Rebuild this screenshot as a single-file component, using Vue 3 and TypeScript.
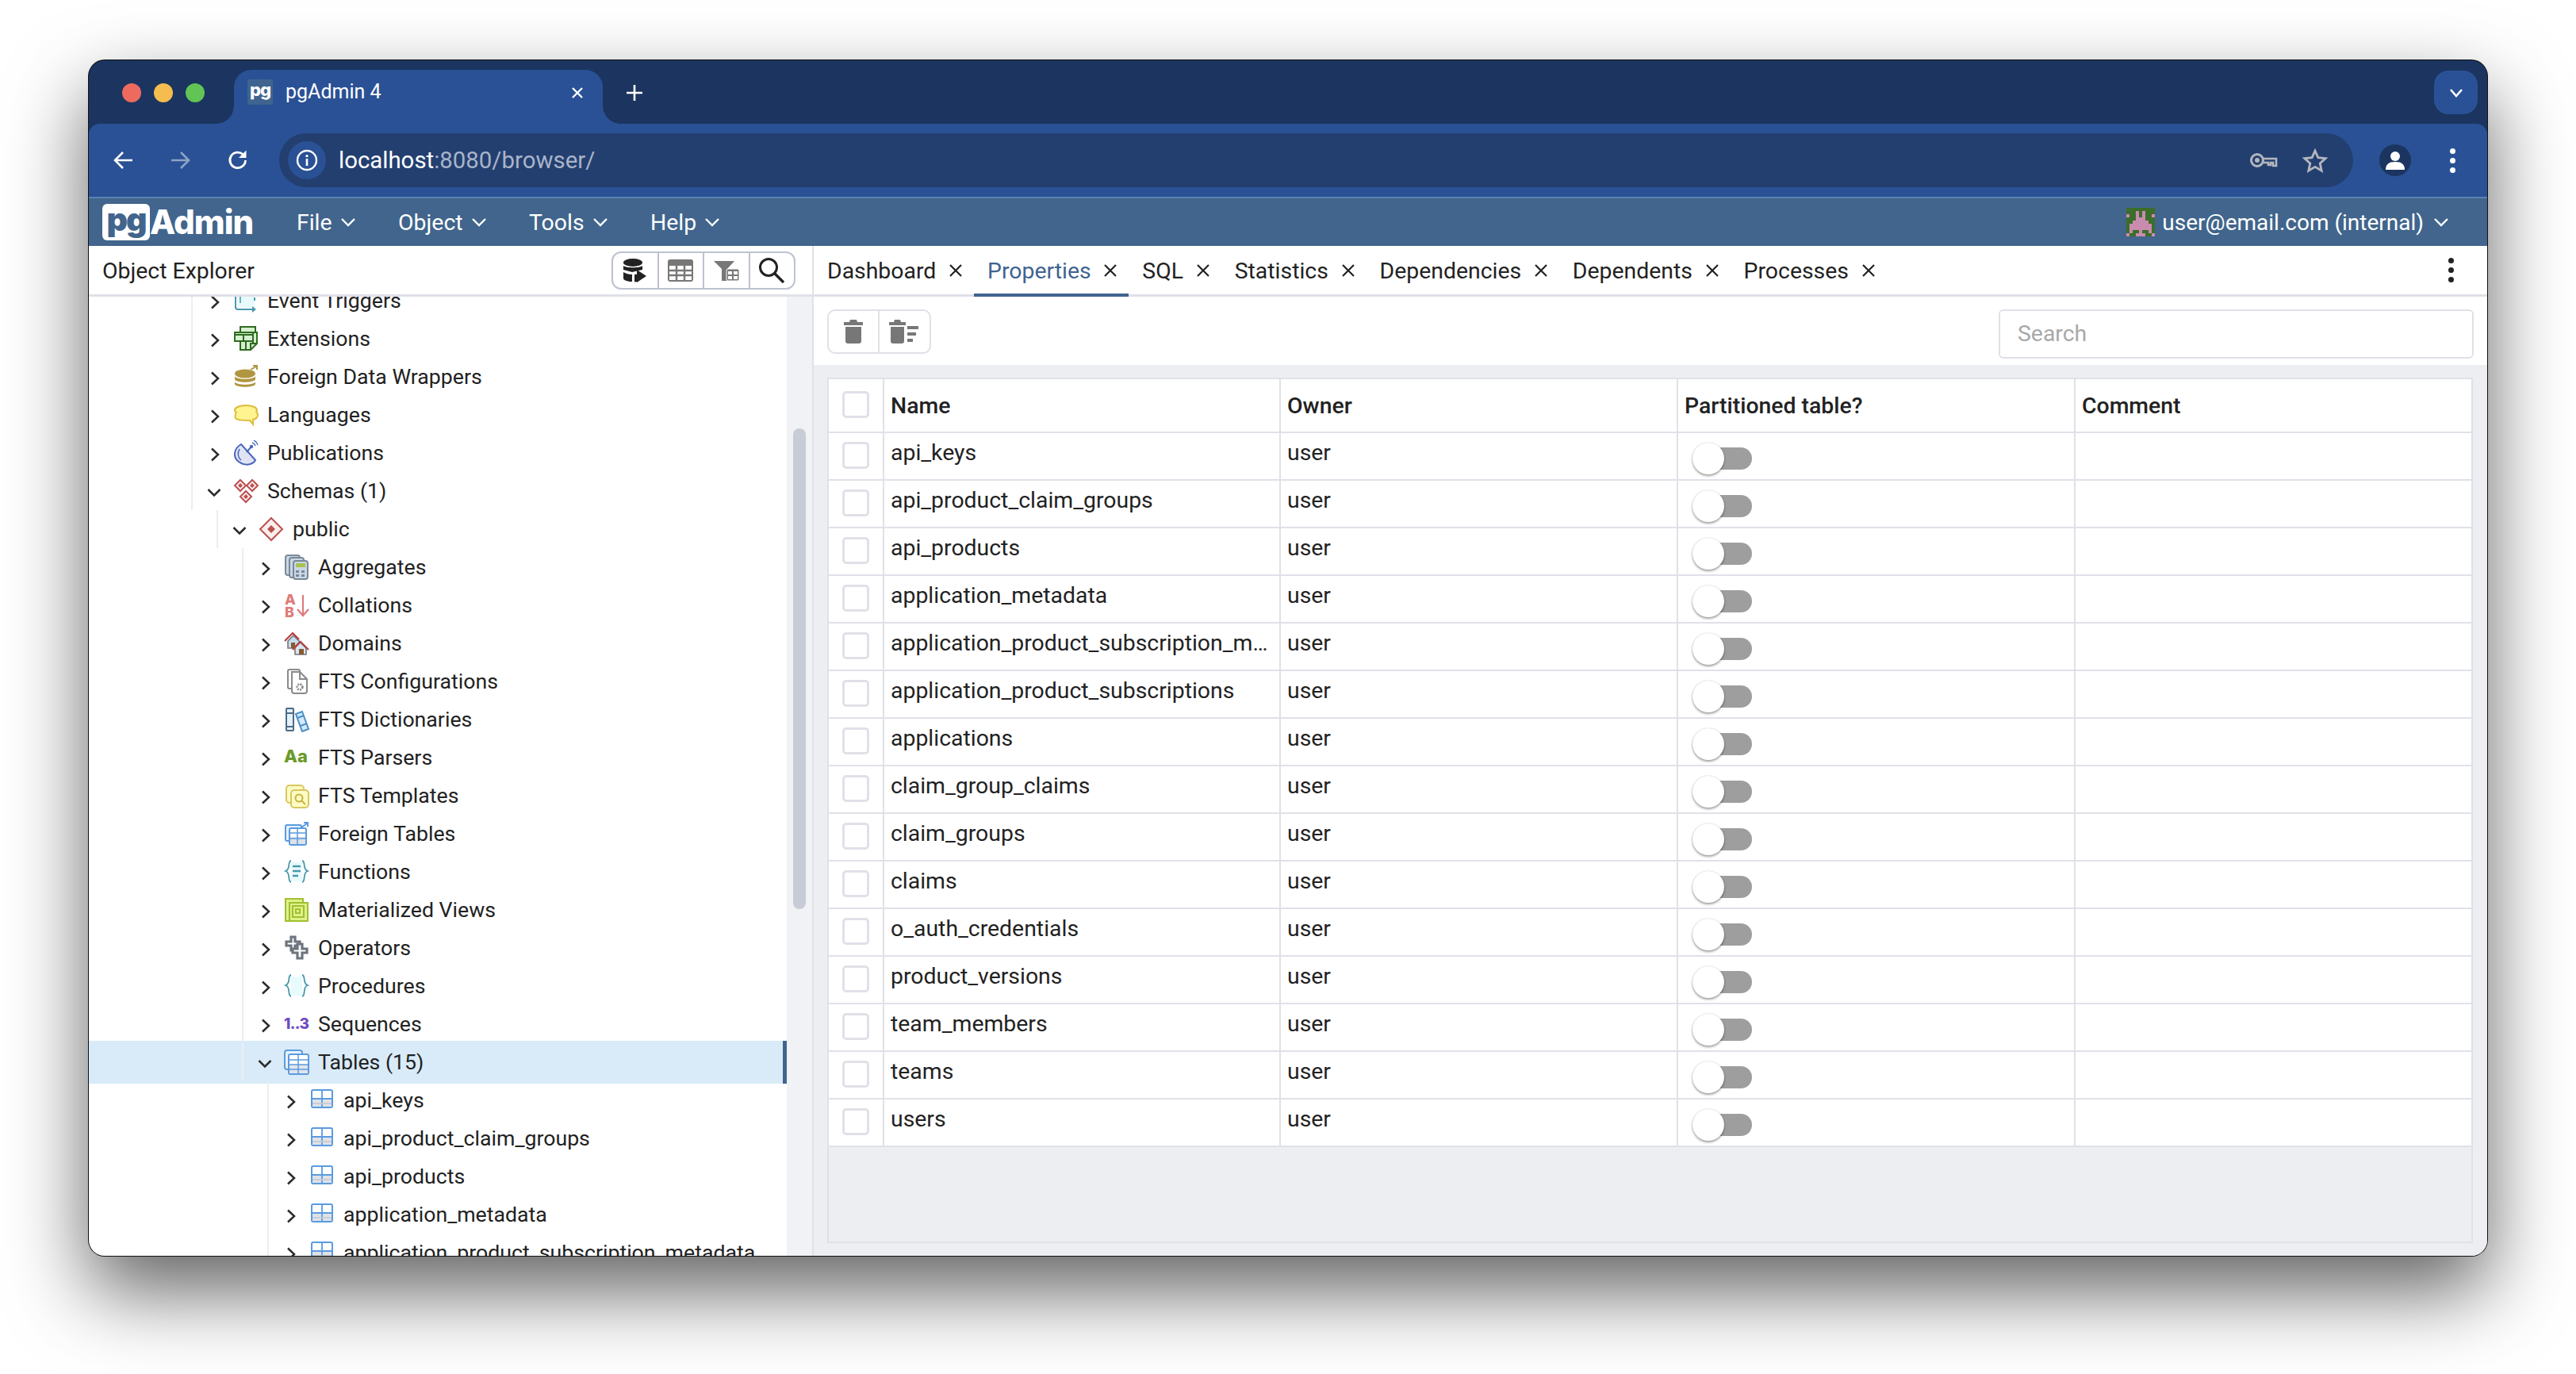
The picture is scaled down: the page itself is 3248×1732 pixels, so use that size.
<script setup lang="ts">
interface TreeRow { label: string; icon: string; level: number; open?: boolean; selected?: boolean }
const tree: TreeRow[] = [
  { label: 'Event Triggers', icon: 'trig', level: 0 },
  { label: 'Extensions', icon: 'ext', level: 0 },
  { label: 'Foreign Data Wrappers', icon: 'fdw', level: 0 },
  { label: 'Languages', icon: 'lang', level: 0 },
  { label: 'Publications', icon: 'pub', level: 0 },
  { label: 'Schemas (1)', icon: 'schemas', level: 0, open: true },
  { label: 'public', icon: 'public', level: 1, open: true },
  { label: 'Aggregates', icon: 'agg', level: 2 },
  { label: 'Collations', icon: 'coll', level: 2 },
  { label: 'Domains', icon: 'dom', level: 2 },
  { label: 'FTS Configurations', icon: 'conf', level: 2 },
  { label: 'FTS Dictionaries', icon: 'dict', level: 2 },
  { label: 'FTS Parsers', icon: 'pars', level: 2 },
  { label: 'FTS Templates', icon: 'tmpl', level: 2 },
  { label: 'Foreign Tables', icon: 'ftab', level: 2 },
  { label: 'Functions', icon: 'func', level: 2 },
  { label: 'Materialized Views', icon: 'mview', level: 2 },
  { label: 'Operators', icon: 'op', level: 2 },
  { label: 'Procedures', icon: 'proc', level: 2 },
  { label: 'Sequences', icon: 'seq', level: 2 },
  { label: 'Tables (15)', icon: 'tabs', level: 2, open: true, selected: true },
  { label: 'api_keys', icon: 'tab', level: 3 },
  { label: 'api_product_claim_groups', icon: 'tab', level: 3 },
  { label: 'api_products', icon: 'tab', level: 3 },
  { label: 'application_metadata', icon: 'tab', level: 3 },
  { label: 'application_product_subscription_metadata', icon: 'tab', level: 3 },
]
const tabs = ['Dashboard', 'Properties', 'SQL', 'Statistics', 'Dependencies', 'Dependents', 'Processes']
const menus = ['File', 'Object', 'Tools', 'Help']
const names = [
  'api_keys', 'api_product_claim_groups', 'api_products', 'application_metadata',
  'application_product_subscription_metadata', 'application_product_subscriptions', 'applications',
  'claim_group_claims', 'claim_groups', 'claims', 'o_auth_credentials', 'product_versions',
  'team_members', 'teams', 'users',
]
const avatarPink = [
  [3, 1, 1, 2], [5, 1, 1, 2], [0, 2, 1, 1], [8, 2, 1, 1],
  [3, 3, 3, 1], [3, 4, 3, 1], [2, 4, 5, 3], [1, 5, 7, 2], [1, 7, 1, 1], [7, 7, 1, 1], [0, 8, 1, 1], [8, 8, 1, 1], [4, 7, 1, 1],
]
</script>

<template>
  <div class="page">
    <div class="window">
      <div class="tabstrip">
        <div class="lights"><i class="l red"></i><i class="l yellow"></i><i class="l green"></i></div>
        <div class="btab">
          <span class="fav">pg</span>
          <span class="btab-title">pgAdmin 4</span>
          <svg class="btab-x" width="16" height="16" viewBox="0 0 16 16"><path d="M2 2l12 12M14 2L2 14" stroke="#fff" stroke-width="2.4" fill="none" /></svg>
        </div>
        <svg class="plus" width="24" height="24" viewBox="0 0 24 24"><path d="M12 2v20M2 12h20" stroke="#fff" stroke-width="2.6" fill="none" /></svg>
        <div class="spacer"></div>
        <div class="tabmenu"><svg width="18" height="12" viewBox="0 0 18 12"><path d="M2 2l7 8 7-8" stroke="#fff" stroke-width="2.6" fill="none" /></svg></div>
      </div>

      <div class="toolbar">
        <svg class="nav" width="28" height="28" viewBox="0 0 28 28"><path d="M25 14H4M13 4L3 14l10 10" stroke="#fff" stroke-width="2.6" fill="none" /></svg>
        <svg class="nav" width="28" height="28" viewBox="0 0 28 28"><path d="M3 14h21M15 4l10 10-10 10" stroke="#8ea3c6" stroke-width="2.6" fill="none" /></svg>
        <svg class="nav" width="28" height="28" viewBox="0 0 28 28"><path d="M23.5 14a9.8 9.8 0 1 1-3-7.2" stroke="#fff" stroke-width="2.8" fill="none" /><path d="M24.5 1.5v9.500h-9.500z" fill="#fff" /></svg>
        <div class="address">
          <div class="info"><svg width="28" height="28" viewBox="0 0 28 28"><circle cx="14" cy="14" r="12" stroke="#fff" stroke-width="2.4" fill="none" /><circle cx="14" cy="8.6" r="1.7" fill="#fff" /><path d="M14 12v9" stroke="#fff" stroke-width="2.6" /></svg></div>
          <span class="url"><span class="host">localhost</span>:8080/browser/</span>
          <div class="spacer"></div>
          <svg class="key" width="36" height="22" viewBox="0 0 36 22"><circle cx="10" cy="11" r="7.5" fill="none" stroke="#b3b6bd" stroke-width="3" /><circle cx="10" cy="11" r="3" fill="#b3b6bd" /><path d="M17 9h17v9h-4v-4h-3v3h-3v-3h-7" fill="none" stroke="#b3b6bd" stroke-width="2.6" /></svg>
          <svg class="star" width="32" height="31" viewBox="0 0 32 31"><path d="M16 3l3.800 8.600 9.400 1-7 6.300 2 9.200-8.200-4.700-8.200 4.700 2-9.200-7-6.300 9.400-1z" fill="none" stroke="#b3b6bd" stroke-width="2.8" /></svg>
        </div>
        <div class="profile"><svg width="26" height="26" viewBox="0 0 26 26"><circle cx="13" cy="8" r="6" fill="#fff" /><path d="M1 25c0-7 4-10 12-10s12 3 12 10z" fill="#fff" /></svg></div>
        <div class="dots white"><i></i><i></i><i></i></div>
      </div>

      <div class="menubar">
        <div class="logo"><span class="logo-pg">pg</span><span class="logo-admin">Admin</span></div>
        <div v-for="m in menus" :key="m" class="menu">
          <span>{{ m }}</span>
          <svg width="20" height="12" viewBox="0 0 20 12"><path d="M2 2l8 8 8-8" stroke="#fff" stroke-width="2.4" fill="none" /></svg>
        </div>
        <div class="spacer"></div>
        <svg class="avatar" width="36" height="36" viewBox="0 0 9 9" shape-rendering="crispEdges">
          <rect width="9" height="9" fill="#3c6d2b" />
          <rect v-for="(r, i) in avatarPink" :key="i" :x="r[0]" :y="r[1]" :width="r[2]" :height="r[3]" fill="#c98bae" />
          <rect x="3" y="8" width="3" height="1" fill="#c98bae" />
        </svg>
        <span class="user">user@email.com (internal)</span>
        <svg width="20" height="12" viewBox="0 0 20 12"><path d="M2 2l8 8 8-8" stroke="#fff" stroke-width="2.4" fill="none" /></svg>
      </div>

      <div class="main">
        <section class="left">
          <header class="left-head">
            <span class="left-title">Object Explorer</span>
            <div class="btn-group">
              <div class="gbtn">
                <svg width="32" height="32" viewBox="0 0 32 32"><ellipse cx="13" cy="6" rx="12" ry="5" fill="#222" /><path d="M1 10c3 3 21 3 24 0v5L12 18 1 15zM1 18c3 2 7 3 11 3v9c-6 0-11-2-11-4zM15 21l5-.5V30l-5 .5z" fill="#222" /><path d="M18 15l12 8-12 8z" fill="#222" /></svg>
              </div>
              <div class="gbtn">
                <svg width="32" height="28" viewBox="0 0 32 28"><rect width="32" height="28" rx="3" fill="#777" /><path d="M2 8h28v18H2z" fill="#fff" /><path d="M11 8v18M21 8v18M2 14h28M2 20h28" stroke="#777" stroke-width="2.4" /></svg>
              </div>
              <div class="gbtn">
                <svg width="32" height="28" viewBox="0 0 32 28"><path d="M0 2h26l-9 10v15h-7V12z" fill="#777" /><rect x="16" y="12" width="16" height="15" rx="2" fill="#777" stroke="#fff" stroke-width="1" /><path d="M18 15h5v4h-5zM25 15h5v4h-5zM18 21h5v4h-5zM25 21h5v4h-5z" fill="#fff" /></svg>
              </div>
              <div class="gbtn">
                <svg width="34" height="34" viewBox="0 0 34 34"><circle cx="13" cy="13" r="10.5" fill="none" stroke="#222" stroke-width="3" /><path d="M21 21l11 11" stroke="#222" stroke-width="3.4" /></svg>
              </div>
            </div>
          </header>
          <div class="left-body">
            <div class="tree-view">
              <div class="tree-list">
                <div v-for="r in tree" :key="r.label" class="trow" :class="{ selected: r.selected }" :style="{ paddingLeft: 129 + r.level * 32 + 'px' }">
                  <div class="trow-inner">
                    <svg v-if="r.open" class="chev chev-d" width="18" height="12" viewBox="0 0 18 12"><path d="M1.5 2L9 9.5 16.5 2" stroke="#2b2b2b" stroke-width="2.5" fill="none" /></svg>
                    <svg v-else class="chev chev-r" width="12" height="18" viewBox="0 0 12 18"><path d="M2 1.5L10 9l-8 7.5" stroke="#2b2b2b" stroke-width="2.5" fill="none" /></svg>
                    <svg class="ticon" width="32" height="32" viewBox="0 0 32 32">
                      <g v-if="r.icon === 'trig'"><path d="M5 3h22v22H5z" fill="#e8fbfc" /><path d="M3 2v22q0 3 3 3h21" fill="none" stroke="#4a98ad" stroke-width="2" /><path d="M9 2v17" stroke="#4a98ad" stroke-width="1.5" /><path d="M27 2v14" stroke="#4a98ad" stroke-width="2" stroke-dasharray="4 6" /><path d="M24 23l5 4-5 4z" fill="#4a98ad" /></g>
                      <g v-else-if="r.icon === 'ext'"><path d="M9 1h19v7h2v14l-8 8H9V19H2V8h7z" fill="#d6efcf" stroke="#2e6b1f" stroke-width="2" /><path d="M2 11h23M13 11v8M9 19h16M9 1v7M9 8h19M25 8v14M22 30v-8h8M16 19v11" fill="none" stroke="#2e6b1f" stroke-width="2" /></g>
                      <g v-else-if="r.icon === 'fdw'"><ellipse cx="15" cy="12" rx="13" ry="5.5" fill="#b09640" /><path d="M2 15c1 5 25 5 26 0v4c-1 5-25 5-26 0zM2 22c1 5 25 5 26 0v3c-1 5-25 5-26 0z" fill="#b09640" /><path d="M22 7l7-4M25 2h5v5" stroke="#b09640" stroke-width="2" fill="none" /></g>
                      <g v-else-if="r.icon === 'lang'"><ellipse cx="16" cy="10" rx="14" ry="6" fill="#fff48f" stroke="#dcbc3c" stroke-width="2" /><path d="M4 13c-2 2-2 7 0 8 3 2 12 2 17 2l4 5v-6c4-1 6-3 6-6 0-2-1-3-2-4" fill="#fff48f" stroke="#dcbc3c" stroke-width="2" /></g>
                      <g v-else-if="r.icon === 'pub'"><path d="M10 5C1 10 -1 21 7 27s18 4 21-2z" fill="#dfe3f4" stroke="#4a67bd" stroke-width="2" /><path d="M8 11c-3 5-2 11 2 14" fill="none" stroke="#4a67bd" stroke-width="1.5" /><path d="M17 15l6-7" stroke="#4a67bd" stroke-width="2" /><circle cx="23" cy="8" r="2.2" fill="#4a67bd" /><path d="M24 3a6 6 0 0 1 4 4M26 0a9 9 0 0 1 5 6" fill="none" stroke="#4a67bd" stroke-width="1.4" /></g>
                      <g v-else-if="r.icon === 'schemas'" fill="none" stroke="#bb5151" stroke-width="2"><path d="M9 2l7 7-7 7-7-7zM24 2l7 7-7 7-7-7zM16 16l7 7-7 7-7-7z" fill="#fbeeed" /><path d="M9 6l3 3-3 3-3-3zM24 6l3 3-3 3-3-3zM16 20l3 3-3 3-3-3z" fill="#bb5151" stroke="none" /></g>
                      <g v-else-if="r.icon === 'public'"><path d="M16 2l14 14-14 14L2 16z" fill="#fbeeed" stroke="#bb5151" stroke-width="2" /><path d="M16 11l5 5-5 5-5-5z" fill="#bb5151" /></g>
                      <g v-else-if="r.icon === 'agg'" stroke="#7b8996" stroke-width="2" fill="#c9d7e6"><rect x="2" y="1" width="18" height="25" rx="3" /><rect x="7" y="4" width="18" height="25" rx="3" /><rect x="12" y="8" width="18" height="23" rx="3" /><rect x="15" y="11" width="12" height="5" fill="#a9c24f" stroke="none" /><path d="M15 20h4v3h-4zM22 20h4v3h-4zM15 25h4v3h-4zM22 25h4v3h-4z" fill="#7b8996" stroke="none" /></g>
                      <g v-else-if="r.icon === 'coll'"><text x="1" y="15" class="svg-t" fill="#e07a7a" font-size="18">A</text><text x="1" y="31" class="svg-t" fill="#e07a7a" font-size="18">B</text><path d="M24 3v25M17 21l7 8 7-8" stroke="#e07a7a" stroke-width="2.2" fill="none" /></g>
                      <g v-else-if="r.icon === 'dom'"><path d="M5 13L12 6l8 8v8H5z" fill="#c5dcf0" stroke="#777" stroke-width="1.6" /><rect x="9" y="15" width="5" height="7" fill="#8a5a2b" /><path d="M12 22l8-8 8 8v8H14v-8z" fill="#d5e6f5" stroke="#777" stroke-width="1.6" /><rect x="19" y="23" width="6" height="7" fill="#8a5a2b" /><path d="M1 13L11 3l8 8M11 24l10-10 10 10" fill="none" stroke="#b93a3a" stroke-width="2" /></g>
                      <g v-else-if="r.icon === 'conf'" fill="#fff" stroke="#8a8a8a" stroke-width="2"><rect x="5" y="1" width="15" height="24" rx="2" /><path d="M10 4h10l9 9v15q0 3-3 3H13q-3 0-3-3z" /><path d="M20 4v9h9" fill="none" /><circle cx="20" cy="23" r="3.4" stroke-width="2.6" stroke-dasharray="2 1.2" /></g>
                      <g v-else-if="r.icon === 'dict'"><rect x="3" y="2" width="9" height="28" rx="1" fill="#e3f1fb" stroke="#4f6a85" stroke-width="2" /><path d="M3 8h9M3 25h9" stroke="#4f6a85" stroke-width="2" /><path d="M15 9l8-3 8 22-8 3z" fill="#d4e9f8" stroke="#4a90c8" stroke-width="2" /><path d="M17 14l8-3M21 24l8-3" stroke="#4a90c8" stroke-width="2" /></g>
                      <g v-else-if="r.icon === 'pars'"><text x="0" y="22" class="svg-t" fill="#6c9a2a" font-size="22">Aa</text></g>
                      <g v-else-if="r.icon === 'tmpl'" stroke="#d8c860" stroke-width="2" fill="#fdfbc4"><rect x="3" y="3" width="22" height="22" rx="4" /><rect x="9" y="9" width="22" height="22" rx="4" /><circle cx="19" cy="19" r="4.5" fill="none" stroke="#c9b340" /><path d="M22 22l5 5" stroke="#c9b340" /></g>
                      <g v-else-if="r.icon === 'ftab'"><rect x="2" y="5" width="20" height="20" rx="2" fill="#e9f2fc" stroke="#5a9be0" stroke-width="2" /><rect x="7" y="9" width="21" height="21" rx="2" fill="#fff" stroke="#5a9be0" stroke-width="2" /><path d="M8 20h19v9H8z" fill="#dfe2e8" /><path d="M7 15h21M7 22h21M17 9v21" stroke="#5a9be0" stroke-width="1.5" /><path d="M22 8l7-5M25 2h5v5" fill="none" stroke="#5a9be0" stroke-width="2" /></g>
                      <g v-else-if="r.icon === 'func'"><path d="M9 4h14v24H9z" fill="#e8fbfc" /><path d="M9 2C4 3 9 13 2 15c7 2 2 13 7 14M23 2c5 1 0 11 7 13-7 2-2 13-7 14" fill="none" stroke="#4a98ad" stroke-width="1.8" /><path d="M11 9h10M11 15h10M11 21h7" stroke="#4a98ad" stroke-width="2.4" /></g>
                      <g v-else-if="r.icon === 'mview'" stroke="#a0c030" stroke-width="2" fill="#dff08a"><rect x="2" y="2" width="22" height="28" /><rect x="7" y="7" width="23" height="23" /><rect x="11" y="11" width="14" height="14" fill="none" /><rect x="15" y="15" width="5" height="5" fill="none" /></g>
                      <g v-else-if="r.icon === 'op'" fill="#fff" stroke="#6e747e" stroke-width="3.200"><path d="M9 2h5v6h6v5h-6v6H9v-6H3V8h6z" /><path d="M17 11h6v6h6v5h-6v7h-6v-7h-6v-5h6z" /></g>
                      <g v-else-if="r.icon === 'proc'"><path d="M9 4h14v24H9z" fill="#e8fbfc" /><path d="M9 2C4 3 9 13 2 15c7 2 2 13 7 14M23 2c5 1 0 11 7 13-7 2-2 13-7 14" fill="none" stroke="#4a98ad" stroke-width="1.8" /></g>
                      <g v-else-if="r.icon === 'seq'"><text x="0" y="22" class="svg-t" fill="#6f4bc4" font-size="19" textLength="32">1..3</text></g>
                      <g v-else-if="r.icon === 'tabs'"><rect x="1" y="1" width="22" height="24" rx="3" fill="#e9f2fc" stroke="#5a9be0" stroke-width="2" /><rect x="6" y="6" width="25" height="25" rx="2" fill="#fff" stroke="#5a9be0" stroke-width="2" /><path d="M7 19h23v11H7z" fill="#e3e4e9" /><path d="M6 13h25M6 19h25M6 25h25M18 6v25" stroke="#5a9be0" stroke-width="1.5" /></g>
                      <g v-else-if="r.icon === 'tab'"><rect x="3" y="3" width="26" height="22" rx="2" fill="#fff" stroke="#5a9be0" stroke-width="2" /><path d="M4 15h24v9H4z" fill="#dfe2e8" /><path d="M3 14h26M16 3v22" stroke="#5a9be0" stroke-width="1.8" /><path d="M4 20h24" stroke="#c8ccd4" stroke-width="1.8" /></g>
                    </svg>
                    <span class="tlabel">{{ r.label }}</span>
                  </div>
                </div>
              </div>
            </div>
            <div class="track"><div class="thumb"></div></div>
          </div>
        </section>

        <section class="right">
          <nav class="tabs">
            <div v-for="t in tabs" :key="t" class="tab" :class="{ active: t === 'Properties' }">
              <span>{{ t }}</span>
              <svg width="20" height="20" viewBox="0 0 20 20"><path d="M3 3l14 14M17 3L3 17" stroke="#222" stroke-width="2.2" fill="none" /></svg>
            </div>
            <div class="spacer"></div>
            <div class="dots"><i></i><i></i><i></i></div>
          </nav>
          <div class="props-bar">
            <div class="del-group">
              <div class="dbtn">
                <svg width="26" height="30" viewBox="0 0 26 30"><path d="M9 0h8l1 3h7v4H1V3h7z" fill="#777" /><path d="M3 9h20v18q0 3-3 3H6q-3 0-3-3z" fill="#777" /></svg>
              </div>
              <div class="dbtn">
                <svg width="40" height="30" viewBox="0 0 40 30"><path d="M7 0h7l1 3h6v4H0V3h6z" fill="#777" /><path d="M2 9h17v18q0 3-3 3H5q-3 0-3-3z" fill="#777" /><path d="M23 8h14v4H23zM23 16h11v4H23zM23 24h7v4h-7z" fill="#777" /></svg>
              </div>
            </div>
            <div class="search">Search</div>
          </div>
          <div class="props-body">
            <div class="grid">
              <div class="grow ghead">
                <div class="cell ccheck"><i class="box"></i></div>
                <div class="cell">Name</div>
                <div class="cell">Owner</div>
                <div class="cell">Partitioned table?</div>
                <div class="cell">Comment</div>
              </div>
              <div v-for="n in names" :key="n" class="grow">
                <div class="cell ccheck"><i class="box"></i></div>
                <div class="cell ctext"><span class="ell">{{ n }}</span></div>
                <div class="cell ctext">user</div>
                <div class="cell ctoggle"><div class="toggle"><i class="knob"></i></div></div>
                <div class="cell"></div>
              </div>
            </div>
          </div>
        </section>
      </div>
    </div>
  </div>
</template>

<style>
html, body { margin: 0; background: #fff; }
</style>

<style scoped>
.page {
  width: 3248px;
  height: 1732px;
  box-sizing: border-box;
  padding: 76px 112px 149px 112px;
  background: #fff;
  overflow: hidden;
  font-family: Roboto, "Liberation Sans", sans-serif;
  font-size: 28.4px;
  color: #222;
}
.window {
  height: 100%;
  display: flex;
  flex-direction: column;
  border-radius: 20px;
  overflow: hidden;
  background: #1b3560;
  box-shadow: 0 0 0 1px #111, 0 44px 100px 0 rgba(0, 0, 0, 0.62);
}
.spacer { flex: 1; }
.tabstrip {
  height: 80px;
  flex: none;
  box-sizing: border-box;
  padding: 12px 12px 0 42px;
  display: flex;
  align-items: flex-start;
}
.lights { display: flex; gap: 16px; margin-top: 17px; margin-right: 37px; }
.l { width: 24px; height: 24px; border-radius: 50%; display: block; }
.red { background: #ee6a5f; }
.yellow { background: #f5bd4f; }
.green { background: #61c454; }
.btab {
  position: relative;
  width: 465px;
  height: 68px;
  box-sizing: border-box;
  padding: 12px 24px 0 17px;
  display: flex;
  align-items: flex-start;
  background: #2a5195;
  border-radius: 22px 22px 0 0;
  color: #fff;
  font-size: 25px;
}
.btab::before, .btab::after {
  content: "";
  position: absolute;
  bottom: 0;
  width: 22px;
  height: 22px;
}
.btab::before { left: -22px; background: radial-gradient(circle at 0 0, transparent 21.5px, #2a5195 22px); }
.btab::after { right: -22px; background: radial-gradient(circle at 100% 0, transparent 21.5px, #2a5195 22px); }
.fav {
  width: 32px;
  height: 32px;
  background: #3f6490;
  border-radius: 3px;
  font: 800 22px/26px Inter, sans-serif;
  text-align: center;
  letter-spacing: -1px;
  color: #fff;
}
.btab-title { margin-left: 16px; line-height: 32px; flex: 1; }
.btab-x { margin-top: 9px; }
.plus { margin: 17px 0 0 28px; }
.tabmenu {
  width: 55px;
  height: 55px;
  margin-top: 1px;
  border-radius: 18px;
  background: #2a5195;
  display: flex;
  align-items: center;
  justify-content: center;
}
.toolbar {
  height: 92px;
  flex: none;
  box-sizing: border-box;
  background: #2a5195;
  border-radius: 14px 14px 0 0;
  padding: 0 40px 0 30px;
  display: flex;
  align-items: center;
}
.nav { margin-right: 43px; flex: none; }
.nav:nth-child(2) { margin-right: 45px; }
.nav:nth-child(3) { margin-right: 38px; }
.address {
  flex: 1;
  height: 68px;
  background: #233f70;
  border-radius: 34px;
  display: flex;
  align-items: center;
  padding: 0 32px 0 11px;
  color: #a9b4c8;
  font-size: 29.4px;
}
.info {
  width: 48px;
  height: 48px;
  border-radius: 50%;
  background: #2a5195;
  display: flex;
  align-items: center;
  justify-content: center;
  margin-right: 16px;
}
.host { color: #fff; }
.key { margin-right: 31px; }
.profile {
  width: 40px;
  height: 40px;
  margin-left: 33px;
  border-radius: 50%;
  background: #1b3560;
  display: flex;
  align-items: center;
  justify-content: center;
  overflow: hidden;
}
.dots { width: 8px; display: flex; flex-direction: column; align-items: center; gap: 5px; }
.dots i { width: 7px; height: 7px; border-radius: 50%; background: #222; display: block; }
.dots.white { margin-left: 48px; }
.dots.white i { background: #fff; }
.menubar {
  height: 62px;
  flex: none;
  box-sizing: border-box;
  background: #41658c;
  border-top: 2px solid #5a82b0;
  padding: 0 48px 0 17px;
  display: flex;
  align-items: center;
  color: #fff;
}
.logo { display: flex; align-items: center; width: 245px; }
.logo-pg {
  width: 60px;
  height: 46px;
  background: #fff;
  color: #41658c;
  border-radius: 6px;
  font: 900 41px/38px Inter, sans-serif;
  letter-spacing: -2px;
  text-align: center;
}
.logo-admin { font: 800 42px/46px Inter, sans-serif; letter-spacing: -1px; color: #fff; }
.menu { display: flex; align-items: center; gap: 10px; margin-right: 53.5px; }
.avatar { margin-right: 9px; }
.user { margin-right: 12px; font-size: 28px; }
.main { flex: 1; min-height: 0; display: flex; background: #fff; }
.left {
  width: 912px;
  flex: none;
  display: flex;
  flex-direction: column;
  border-right: 2px solid #e0e1e8;
}
.left-head {
  height: 64px;
  flex: none;
  box-sizing: border-box;
  border-bottom: 3px solid #e0e1e8;
  padding: 0 21px 0 17px;
  display: flex;
  align-items: center;
  justify-content: space-between;
}
.left-title { margin-top: 2px; }
.btn-group {
  display: flex;
  height: 48px;
  box-sizing: border-box;
  margin-top: 1px;
  border: 2px solid #bcc2d0;
  border-radius: 12px;
}
.gbtn {
  width: 55.5px;
  display: flex;
  align-items: center;
  justify-content: center;
  border-right: 2px solid #bcc2d0;
}
.gbtn:last-child { border-right: 0; }
.left-body { flex: 1; min-height: 0; display: flex; }
.tree-view { flex: 1; min-width: 0; overflow: hidden; }
.tree-list { margin-top: -19px; }
.trow { position: relative; height: 48px; font-size: 26.7px; }
.trow.selected::before {
  content: "";
  position: absolute;
  left: 0;
  right: 0;
  top: -3px;
  bottom: -3px;
  background: #d9ebf8;
  border-right: 5px solid #3f6490;
}
.trow-inner {
  position: relative;
  height: 100%;
  border-left: 2px solid #ecedf3;
  display: flex;
  align-items: center;
  white-space: nowrap;
}
.chev { flex: none; margin-top: 4px; }
.chev-r { margin-left: 22px; margin-right: 18px; }
.chev-d { margin-left: 18px; margin-right: 16px; }
.ticon { flex: none; margin-left: -1px; margin-right: 11px; }
.tlabel { line-height: 48px; }
.svg-t { font-family: Inter, sans-serif; font-weight: 800; }
.track { width: 32px; flex: none; background: #f1f2f5; }
.thumb { width: 16px; height: 606px; margin: 166px 0 0 8px; border-radius: 8px; background: #c8ccd6; }
.right { flex: 1; min-width: 0; display: flex; flex-direction: column; background: #eceef2; }
.tabs {
  height: 64px;
  flex: none;
  box-sizing: border-box;
  border-bottom: 3px solid #e0e1e8;
  background: #fff;
  display: flex;
  align-items: stretch;
  padding-right: 42px;
}
.tab {
  display: flex;
  align-items: center;
  gap: 14.700px;
  padding: 2px 13px 0 17px;
  box-sizing: border-box;
  margin-bottom: -3px;
  border-bottom: 4px solid transparent;
}
.tab.active { color: #3f6490; border-bottom-color: #3f6490; }
.tabs .dots { align-self: center; }
.props-bar {
  height: 86px;
  flex: none;
  box-sizing: border-box;
  background: #fff;
  padding: 16px 17px 0 17px;
  display: flex;
  justify-content: space-between;
  align-items: flex-start;
}
.del-group {
  display: flex;
  height: 56px;
  box-sizing: border-box;
  border: 2px solid #dfe1e8;
  border-radius: 10px;
}
.dbtn {
  width: 62px;
  display: flex;
  align-items: center;
  justify-content: center;
  border-right: 2px solid #dfe1e8;
}
.dbtn:last-child { width: 63px; border-right: 0; }
.search {
  width: 599px;
  height: 62px;
  box-sizing: border-box;
  border: 2px solid #dfe1e8;
  border-radius: 6px;
  padding-left: 22px;
  color: #a8a8a8;
  line-height: 58px;
}
.props-body { flex: 1; min-height: 0; padding: 16px 18px 16px 17px; display: flex; }
.grid { flex: 1; border: 2px solid #e0e1e8; background: #eceef2; }
.grow {
  display: grid;
  grid-template-columns: 70px 500px 501px 501px 1fr;
  height: 60px;
  box-sizing: border-box;
  background: #fff;
  border-bottom: 2px solid #e0e1e8;
}
.ghead { height: 68px; font-weight: 500; }
.cell {
  min-width: 0;
  box-sizing: border-box;
  display: flex;
  align-items: center;
  padding: 0 10px 0 8px;
  border-right: 2px solid #e0e1e8;
}
.cell:last-child { border-right: 0; }
.ccheck { padding: 0 0 2px; justify-content: center; }
.ctext { padding-bottom: 10px; }
.ell { overflow: hidden; white-space: nowrap; text-overflow: ellipsis; }
.box { width: 34px; height: 34px; box-sizing: border-box; border: 3px solid #e0e1e8; border-radius: 5px; background: #fff; display: block; }
.ctoggle { padding: 6px 0 0 18px; }
.toggle { position: relative; width: 75px; height: 28px; }
.toggle::before {
  content: "";
  position: absolute;
  left: 8px;
  right: 0;
  top: 0;
  bottom: 0;
  border-radius: 14px;
  background: #9e9e9e;
}
.knob {
  position: absolute;
  left: 0;
  top: -6px;
  width: 40px;
  height: 40px;
  border-radius: 50%;
  background: #fff;
  box-shadow: 0 2px 3px rgba(0, 0, 0, 0.35), 0 0 2px rgba(0, 0, 0, 0.2);
}
</style>
